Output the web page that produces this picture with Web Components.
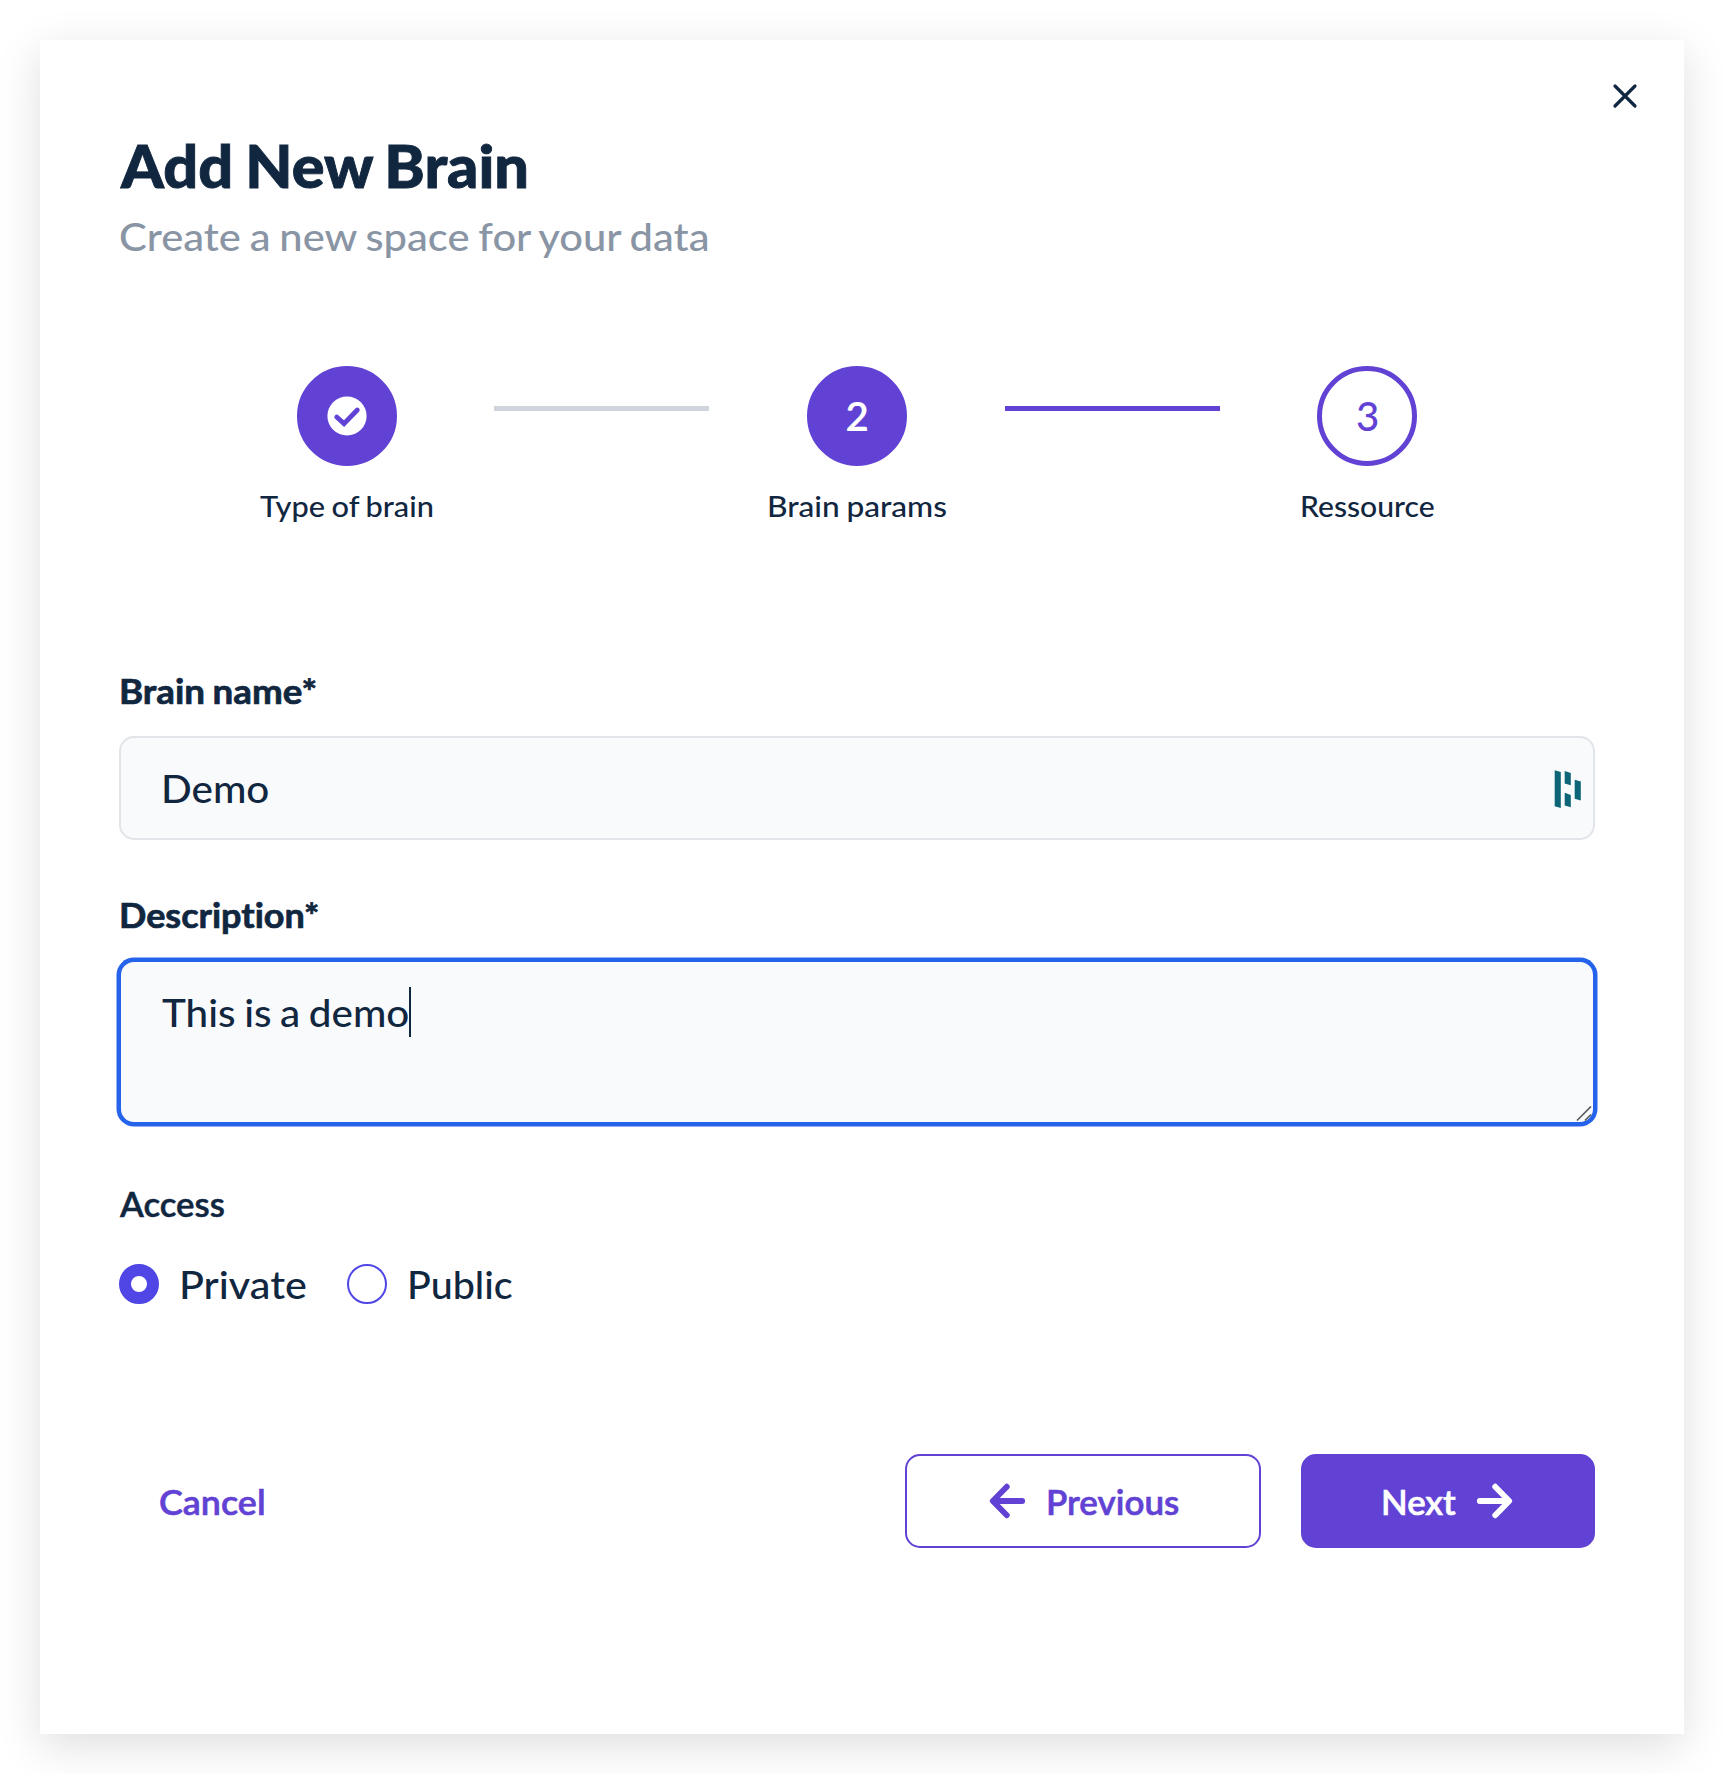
<!DOCTYPE html>
<html lang="en">
<head>
<meta charset="utf-8">
<title>Add New Brain</title>
<style>
  body { margin: 0; background: #fff; font-family: Lato, "Open Sans", sans-serif; color: #11263f; }
</style>
</head>
<body>
<brain-dialog>
  <fit-text slot="title" size="58.6" line="70" weight="900" bold=".9" ink="408" dx="-.5">Add New Brain</fit-text>
  <fit-text slot="subtitle" size="39" line="47" weight="500" ink="591.5">Create a new space for your data</fit-text>

  <step-list slot="steps">
    <step-item state="done"><fit-text size="29.3" line="35" weight="500" ink="173" dx="-.5">Type of brain</fit-text></step-item>
    <step-line></step-line>
    <step-item state="current">
      <fit-text slot="mark" size="40.2" line="48" weight="600" bold=".2" ink="20" dx="-.5">2</fit-text>
      <fit-text size="29.3" line="35" weight="500" ink="177" dx="1">Brain params</fit-text>
    </step-item>
    <step-line active></step-line>
    <step-item state="next">
      <fit-text slot="mark" size="40.2" line="48" weight="500" ink="19" dx="-.5">3</fit-text>
      <fit-text size="29.3" line="35" weight="500" ink="132" dx="1">Ressource</fit-text>
    </step-item>
  </step-list>

  <form-field kind="input">
    <fit-text slot="label" size="35.2" line="42" weight="700" bold=".7" ink="195">Brain name*</fit-text>
    <fit-text size="39" line="47" weight="500" ink="104">Demo</fit-text>
  </form-field>
  <form-field kind="area">
    <fit-text slot="label" size="35.2" line="42" weight="700" bold=".7" ink="198">Description*</fit-text>
    <fit-text size="39" line="47" weight="500" ink="246">This is a demo</fit-text>
  </form-field>

  <radio-group>
    <fit-text slot="label" size="35.2" line="42" weight="600" bold=".5" ink="105.5" dx="-1">Access</fit-text>
    <radio-option checked><fit-text size="39" line="47" weight="500" ink="124">Private</fit-text></radio-option>
    <radio-option><fit-text size="39" line="47" weight="500" ink="102">Public</fit-text></radio-option>
  </radio-group>

  <action-button slot="cancel" kind="plain"><fit-text size="35.2" line="42" weight="600" bold=".6" ink="104">Cancel</fit-text></action-button>
  <action-button slot="actions" kind="outline"><arrow-icon></arrow-icon><fit-text size="35.2" line="42" weight="600" bold=".6" ink="130">Previous</fit-text></action-button>
  <action-button slot="actions" kind="solid"><fit-text size="35.2" line="42" weight="600" bold=".6" ink="72" dx=".5">Next</fit-text><arrow-icon dir="right"></arrow-icon></action-button>
</brain-dialog>

<script>
const define = (name, html, setup) => {
  const tpl = document.createElement('template');
  tpl.innerHTML = html;
  customElements.define(name, class extends HTMLElement {
    constructor() {
      super();
      this.attachShadow({ mode: 'open' }).append(tpl.content.cloneNode(true));
    }
    connectedCallback() { if (setup) setup(this, this.shadowRoot); }
  });
};

/* A line of text widened (and, past a limit, tracked) so that its ink spans exactly the given width. */
const pen = document.createElement('canvas').getContext('2d');
define('fit-text', `
  <style>
    :host { display: block; flex: none; white-space: nowrap; }
    span { display: block; width: max-content; transform-origin: 0 0; font-variant-ligatures: none; }
  </style><span><slot></slot></span>`,
  (el, root) => {
    const num = (n, d = 0) => +(el.getAttribute(n) || d);
    const size = num('size'), ink = num('ink'), weight = num('weight', 400);
    const text = el.textContent, spaces = text.split(' ').length - 1;
    const word = -0.04 * size;
    pen.font = `${weight} ${size}px Lato`;
    const m = pen.measureText(text);
    const natural = m.actualBoundingBoxLeft + m.actualBoundingBoxRight + spaces * word;
    const scale = text.length > 1 ? Math.min(1.09, Math.max(0.96, ink / natural)) : 1;
    const gap = text.length > 1 ? (ink / scale - natural) / (text.length - 1) : 0;
    const left = m.actualBoundingBoxLeft * scale + num('dx');
    root.querySelector('span').style.cssText =
      `font-size:${size}px;font-weight:${weight};line-height:${num('line')}px;letter-spacing:${gap}px;` +
      `word-spacing:${word}px;-webkit-text-stroke:${num('bold')}px currentColor;margin-left:${left}px;transform:scaleX(${scale})`;
    el.style.width = ink + 'px';
  });

define('brain-dialog', `
  <style>
    :host { display: flow-root; }
    .card { box-sizing: border-box; width: 1644px; height: 1694px; margin: 40px; padding: 32px 89px 0 79px;
            background: #fff; box-shadow: 0 12px 42px rgba(0,0,0,.13); display: flex; flex-direction: column; }
    .close { display: flex; justify-content: flex-end; margin-right: -54px; height: 48px; }
    .head { display: flex; flex-direction: column; gap: 13px; padding: 10px 0 0 1px; }
    .sub { color: #8995a4; }
    .steps { margin-top: 106px; }
    .body { display: flex; flex-direction: column; margin-top: 146px; }
    .foot { display: flex; justify-content: space-between; margin-top: 146px; }
    .right { display: flex; gap: 40px; }
  </style>
  <div class="card">
    <div class="close"><svg width="48" height="48" viewBox="0 0 48 48" fill="none" stroke="#11263f" stroke-width="3.2" stroke-linecap="round"><path d="M14 14 34 34M34 14 14 34"/></svg></div>
    <div class="head"><slot name="title"></slot><div class="sub"><slot name="subtitle"></slot></div></div>
    <div class="steps"><slot name="steps"></slot></div>
    <div class="body"><slot></slot></div>
    <div class="foot"><slot name="cancel"></slot><div class="right"><slot name="actions"></slot></div></div>
  </div>`);

define('step-list', `
  <style>:host { display: grid; grid-template-columns: 294px 215px 296px 215px 294px; padding: 0 81px; }</style><slot></slot>`);

define('step-line', `
  <style>
    :host { display: block; height: 5px; margin-top: 40px; background: #d0d4dc; }
    :host([active]) { background: #6142d4; }
  </style>`);

define('step-item', `
  <style>
    :host { display: flex; flex-direction: column; align-items: center; gap: 22px; }
    .disc { box-sizing: border-box; width: 100px; height: 100px; border: 5px solid #6142d4; border-radius: 50%;
            background: #6142d4; color: #fff; display: flex; align-items: center; justify-content: center; }
    :host([state=next]) .disc { background: #fff; color: #6142d4; }
    svg { display: none; }
    :host([state=done]) svg { display: block; }
  </style>
  <div class="disc"><slot name="mark"></slot>
    <svg width="40" height="40" viewBox="0 0 40 40"><circle cx="20" cy="20" r="19.6" fill="#fff"/><path d="M9.7 21 17 27.6 30.3 14" fill="none" stroke="#6142d4" stroke-width="4.8" stroke-linecap="round"/></svg>
  </div><slot></slot>`);

define('form-field', `
  <style>
    :host { display: flex; flex-direction: column; gap: 25px; }
    :host([kind=input]) { margin-bottom: 53px; }
    .label { padding-left: 2px; }
    .box { box-sizing: border-box; border: 2px solid #e1e4e8; border-radius: 15px; background: #f9fafc;
           display: flex; justify-content: space-between; padding: 27px 12px 0 43px; height: 104px; }
    :host([kind=area]) .box { height: 164px; padding: 27px 1px 0 41px; border-color: #2563eb; box-shadow: 0 0 0 2.5px #2563eb; }
    .value { display: flex; }
    .caret { width: 2px; height: 50px; margin: -2px 0 0 1px; background: #11263f; display: none; }
    .logo { margin-top: 4px; }
    .grip { display: none; align-self: flex-end; }
    :host([kind=area]) .logo { display: none; }
    :host([kind=area]) :is(.caret, .grip) { display: block; }
  </style>
  <div class="label"><slot name="label"></slot></div>
  <div class="box">
    <div class="value"><slot></slot><i class="caret"></i></div>
    <svg class="logo" width="27" height="40" viewBox="0 0 27 40" fill="#0e6577"><path d="M.7 1.3 6.8 3V39L.7 37.3ZM10.7 1.9 16.8 4V16.2L10.7 14.4ZM10.7 23.8 16.8 26V38.2L10.7 36.4ZM20.7 10.8 26.8 12.6V31.5L20.7 29.7Z"/></svg>
    <svg class="grip" width="16" height="16" viewBox="0 0 16 16" fill="none" stroke="#55585d" stroke-width="1.6"><path d="M1 14.5 15 .5M9 14.5 15 8.5"/></svg>
  </div>`);

define('radio-group', `
  <style>
    :host { display: flex; flex-direction: column; gap: 37px; margin-top: 58px; }
    .label { padding-left: 1px; }
    .row { display: flex; gap: 41px; }
  </style>
  <div class="label"><slot name="label"></slot></div><div class="row"><slot></slot></div>`);

define('radio-option', `
  <style>
    :host { display: flex; align-items: center; gap: 23px; height: 47px; }
    i { box-sizing: border-box; width: 40px; height: 40px; border: 2px solid #4f46e5; border-radius: 50%; margin-bottom: 1px; }
    :host([checked]) i { border-width: 12.3px; }
  </style><i></i><slot></slot>`);

define('action-button', `
  <style>
    :host { box-sizing: border-box; height: 94px; border: 2px solid transparent; border-radius: 15px; color: #6142d4;
            display: flex; align-items: center; }
    :host([kind=plain]) { padding-left: 39px; }
    :host([kind=outline]) { width: 356px; padding-left: 82px; gap: 23px; border-color: #6142d4; }
    :host([kind=solid]) { width: 294px; padding-left: 80px; gap: 21px; background: #6142d4; border-color: #6142d4; color: #fff; }
  </style><slot></slot>`);

define('arrow-icon', `
  <style>:host { display: block; width: 37px; height: 36px; } :host([dir=right]) svg { transform: scaleX(-1); } svg { display: block; }</style>
  <svg width="37" height="36" viewBox="0 0 37 36" fill="none" stroke="currentColor" stroke-width="5.8" stroke-linejoin="round" stroke-linecap="round"><path d="M17.8 3.7 3.8 18 17.8 32.3M4.5 18H33.2"/></svg>`);
</script>
</body>
</html>
